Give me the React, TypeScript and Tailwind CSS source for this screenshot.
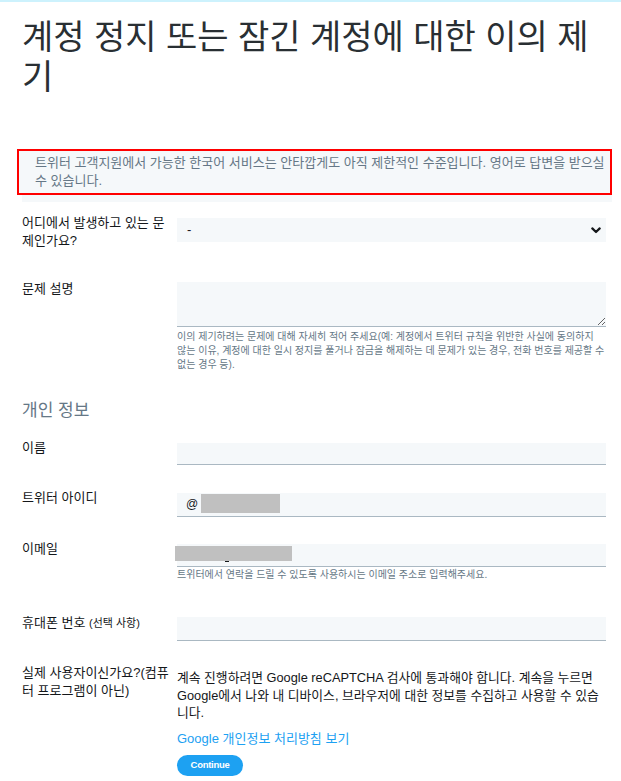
import type { ReactNode } from "react";

// 폼 한 줄: 왼쪽 라벨 + 오른쪽 입력 영역
function Row({
  label,
  children,
  className = "",
}: {
  label: ReactNode;
  children: ReactNode;
  className?: string;
}) {
  return (
    <div className={`flex items-start ${className}`}>
      <div className="mr-[7px] w-[148px] shrink-0 text-[13px] leading-[18px] text-[#14171a]">
        {label}
      </div>
      <div className="min-w-0 flex-1">{children}</div>
    </div>
  );
}

function TextInput({ className = "" }: { className?: string }) {
  return (
    <input
      type="text"
      className={`block w-full border-b border-[#aab8c2] bg-[#f5f8fa] px-[9px] text-[13px] outline-none ${className}`}
    />
  );
}

export default function App() {
  return (
    <div className="min-h-screen bg-white font-['Liberation_Sans','Noto_Sans_CJK_KR',sans-serif] text-[#292f33]">
      <div className="h-[2px] bg-[#cdf2fd]" />

      <main className="pl-[22px] pr-[15px]">
        <h1 className="mt-[15px] text-[34px] leading-[40px] font-normal text-[#292f33]">
          계정 정지 또는 잠긴 계정에 대한 이의 제기
        </h1>

        {/* 한국어 지원 안내 */}
        <div className="-ml-[5px] -mr-[6px] mt-[52px]">
          <div className="border-2 border-[#ff0000] bg-[#f5f8fa] py-[3px] pl-[16px] pr-[4px] text-[13px] leading-[18px] text-[#657786]">
            트위터 고객지원에서 가능한 한국어 서비스는 안타깝게도 아직 제한적인
            수준입니다. 영어로 답변을 받으실 수 있습니다.
          </div>
          <div className="ml-[5px] h-[7px] bg-[#f5f8fa]" />
        </div>

        <Row label="어디에서 발생하고 있는 문제인가요?" className="mt-[12px]">
          <div className="mt-[4px] flex h-[24px] items-center justify-between bg-[#f5f8fa] pl-[10px] pr-[5px] text-[13px] text-[#14171a]">
            <span>-</span>
            <svg width="10" height="7" viewBox="0 0 10 7" fill="none">
              <path
                d="M1.3 1.4 5 5 8.7 1.4"
                stroke="#14171a"
                strokeWidth="2.2"
                strokeLinecap="round"
                strokeLinejoin="round"
              />
            </svg>
          </div>
        </Row>

        <Row label="문제 설명" className="mt-[30px]">
          <textarea className="mt-[2px] block h-[45px] w-full resize-y border-b border-[#aab8c2] bg-[#f5f8fa] outline-none" />
          <p className="mt-[3px] break-keep text-[10px] leading-[14px] text-[#657786]">
            이의 제기하려는 문제에 대해 자세히 적어 주세요(예: 계정에서 트위터
            규칙을 위반한 사실에 동의하지 않는 이유, 계정에 대한 일시 정지를
            풀거나 잠금을 해제하는 데 문제가 있는 경우, 전화 번호를 제공할 수
            없는 경우 등).
          </p>
        </Row>

        <h2 className="mt-[27px] text-[17px] leading-[24px] font-normal text-[#657786]">
          개인 정보
        </h2>

        <Row label="이름" className="mt-[16px]">
          <TextInput className="mt-[4px] h-[22px]" />
        </Row>

        <Row label="트위터 아이디" className="mt-[24px]">
          <div className="mt-[4px] flex h-[24px] items-start border-b border-[#aab8c2] bg-[#f5f8fa]">
            <span className="pl-[9px] pr-[3px] text-[12px] leading-[22px] text-[#14171a]">
              @
            </span>
            <div className="mt-[1px] h-[19px] w-[79px] bg-[#c0c0c0]" />
          </div>
        </Row>

        <Row label="이메일" className="mt-[23px]">
          <div className="mt-[4px] h-[23px] border-b border-[#aab8c2] bg-[#f5f8fa] pt-[2px]">
            <div className="-ml-[2px] h-[15px] w-[117px] bg-[#c0c0c0]" />
            <div className="ml-[48px] h-[1px] w-[4px] bg-[#14171a]" />
          </div>
          <p className="mt-[1px] text-[10px] leading-[14px] text-[#657786]">
            트위터에서 연락을 드릴 수 있도록 사용하시는 이메일 주소로
            입력해주세요.
          </p>
        </Row>

        <Row
          label={
            <>
              휴대폰 번호 <span className="text-[11px]">(선택 사항)</span>
            </>
          }
          className="mt-[32px]"
        >
          <TextInput className="mt-[3px] h-[24px]" />
        </Row>

        <Row label="실제 사용자이신가요?(컴퓨터 프로그램이 아닌)" className="mt-[23px]">
          <p className="mt-[5px] text-[12.8px] leading-[17.5px] text-[#14171a]">
            계속 진행하려면 Google reCAPTCHA 검사에 통과해야 합니다. 계속을
            누르면 Google에서 나와 내 디바이스, 브라우저에 대한 정보를 수집하고
            사용할 수 있습니다.
          </p>
          <a
            href="#"
            className="mt-[8px] block text-[13px] leading-[18px] text-[#1da1f2]"
          >
            Google 개인정보 처리방침 보기
          </a>
          <button className="mt-[7px] h-[21px] w-[66px] rounded-full bg-[#1da1f2] text-[9.5px] font-bold tracking-[-0.3px] text-white">
            Continue
          </button>
        </Row>
      </main>
    </div>
  );
}
